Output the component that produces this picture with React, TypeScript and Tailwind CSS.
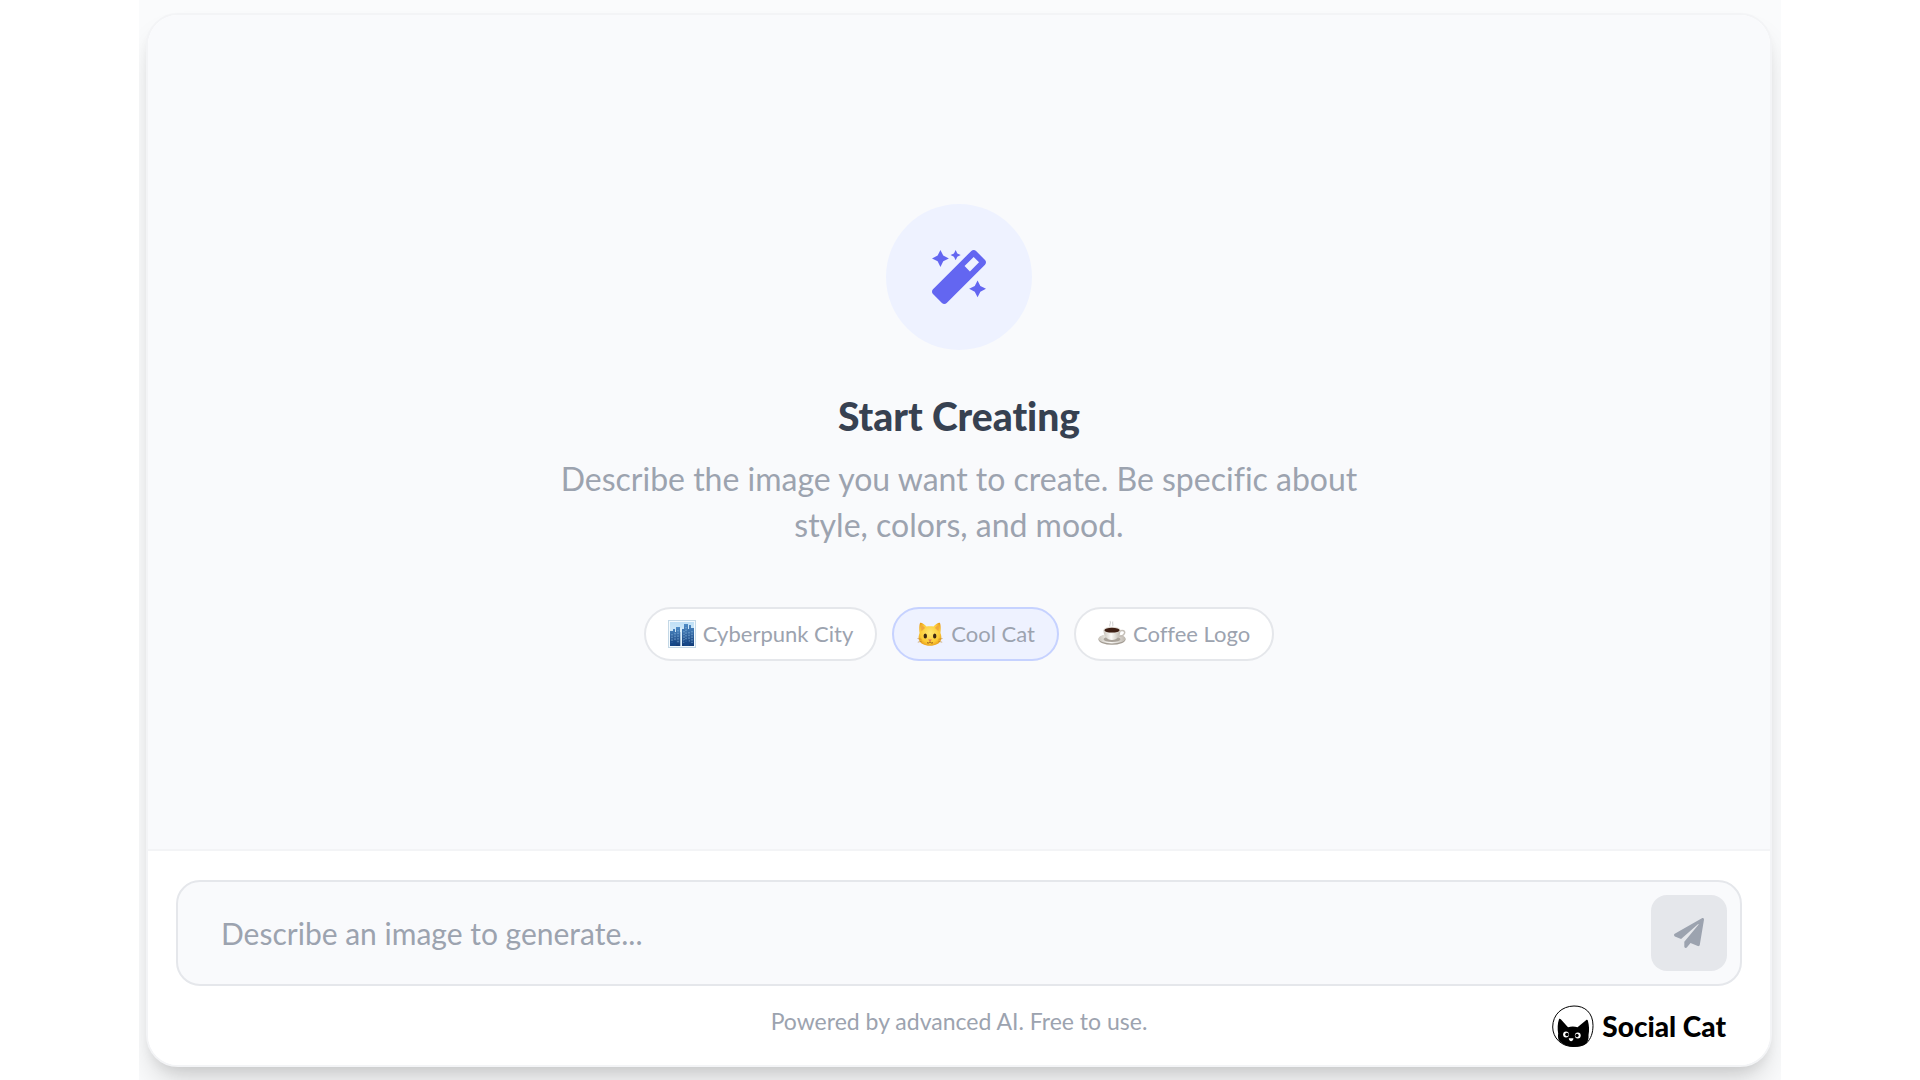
import React from "react";
import { FaMagic, FaPaperPlane } from "react-icons/fa";

function CityIcon() {
  return (
    <svg viewBox="0 0 28 28" className="size-7 shrink-0" aria-hidden="true">
      <defs>
        <linearGradient id="sky" x1="0" y1="0" x2="0" y2="1">
          <stop offset="0" stopColor="#bfe0f6" />
          <stop offset="1" stopColor="#e9f5fc" />
        </linearGradient>
        <linearGradient id="tower" x1="0" y1="0" x2="0" y2="1">
          <stop offset="0" stopColor="#4f8cc6" />
          <stop offset="1" stopColor="#123c78" />
        </linearGradient>
      </defs>
      <rect x="0.5" y="0.5" width="27" height="27" fill="#f4fafe" stroke="#c4d8e6" />
      <rect x="2" y="2" width="24" height="24" fill="url(#sky)" />
      <path d="M2 11h3V9h2v3h1V7h4v5h1v14H2z" fill="url(#tower)" />
      <path d="M14 9h2V4h4v5h1V5h2v3h3v18H14z" fill="url(#tower)" />
      <path d="M4 14v9M7 13v8M10 10v13M16 11v12M18 7v16M21 12v10M24 11v12" stroke="#8fbfe6" strokeWidth="0.8" strokeDasharray="1.5 1.2" />
      <path d="M13 8v18" stroke="#dff1fb" strokeWidth="1.4" />
      <path d="M2 21h6v5H2zM16 20h5v6h-5z" fill="#174a8c" opacity="0.7" />
    </svg>
  );
}

function CatIcon() {
  return (
    <svg viewBox="0 0 28 28" className="size-7 shrink-0" aria-hidden="true">
      <defs>
        <radialGradient id="fur" cx="0.5" cy="0.45" r="0.6">
          <stop offset="0" stopColor="#ffe873" />
          <stop offset="0.7" stopColor="#fccb35" />
          <stop offset="1" stopColor="#e79a1a" />
        </radialGradient>
      </defs>
      <path d="M4.2 2.8C5 2 9 4.6 10.5 6.6c2-.6 5-.6 7 0C19 4.6 23 2 23.8 2.8c1 1.4 1.2 6.6.6 10.2.9 2.2 1.2 4.2.8 6.2C24.3 23.5 19.5 25.7 14 25.7S3.7 23.5 2.8 19.2c-.4-2 0-4 .8-6.2C3 9.4 3.2 4.2 4.2 2.8z" fill="url(#fur)" />
      <path d="M5.3 5c1.3.5 2.8 1.7 3.7 2.9L5.5 11.3C5 9.3 4.9 6.8 5.3 5zM22.7 5c-1.3.5-2.8 1.7-3.7 2.9l3.5 3.4c.5-2 .6-4.5.2-6.3z" fill="#f0a93c" />
      <ellipse cx="9.3" cy="16" rx="1.7" ry="2.5" fill="#3d2712" />
      <ellipse cx="18.7" cy="16" rx="1.7" ry="2.5" fill="#3d2712" />
      <path d="M12 19.5h4L14 21.5z" fill="#e0705a" />
      <path d="M11 22.8q1.8.8 3-1q1.2 1.8 3 1" fill="none" stroke="#8a4d16" strokeWidth="0.9" />
      <path d="M1.5 18.5l4 .8M1.8 22.2l4-1M26.5 18.5l-4 .8M26.2 22.2l-4-1" stroke="#b9822a" strokeWidth="0.6" />
    </svg>
  );
}

function CoffeeIcon() {
  return (
    <svg viewBox="0 0 28 28" className="size-7 shrink-0" aria-hidden="true">
      <defs>
        <linearGradient id="china" x1="0" y1="0" x2="1" y2="0">
          <stop offset="0" stopColor="#c9c4bb" />
          <stop offset="0.45" stopColor="#fbfaf7" />
          <stop offset="1" stopColor="#bdb7ae" />
        </linearGradient>
      </defs>
      <ellipse cx="14" cy="19.5" rx="13.5" ry="5.3" fill="#a29b92" />
      <ellipse cx="14" cy="18.6" rx="13.5" ry="4.9" fill="url(#china)" />
      <ellipse cx="14" cy="19.2" rx="8.5" ry="2.8" fill="#a9a299" />
      <path d="M21.5 11c3.5-1.3 5.8 0 5 2.2-.7 1.9-3.5 3.2-6 3.3" fill="none" stroke="#c5bfb7" strokeWidth="1.5" />
      <path d="M5.5 10c0 5.5 3 10 8.5 10s8.5-4.5 8.5-10z" fill="url(#china)" />
      <ellipse cx="14" cy="10" rx="8.6" ry="3.2" fill="#e4dfd8" />
      <ellipse cx="14" cy="10.2" rx="7.6" ry="2.4" fill="#3f2015" />
      <path d="M12 6.5C10.5 4.5 14 3.5 12 1M14.5 6c1.5-1.5-1-2.5.5-4.5" fill="none" stroke="#d4d4d4" strokeWidth="1.1" />
    </svg>
  );
}

function SocialCatMark() {
  return (
    <svg viewBox="0 0 42 42" className="size-[42px] shrink-0" aria-hidden="true">
      <path d="M22 1C33 .8 41 8 41 20.5c0 7-2 13.5-6.5 17.5C31 41 26.5 41.5 21 41.5 9.5 41.5.7 33 .7 22 .7 9.5 10 1.2 22 1z" fill="#fff" stroke="#000" strokeWidth="1" />
      <path d="M7 14.2c.5-.6 1.3-.5 2 .2l7 7.8c3-1 6.5-1 9.5 0l8.5-7c.8-.6 1.7-.5 1.9.5 1.2 4.5 1.6 9.5.6 14.3.3 3-.3 6-2 8.5C31 41.2 26.5 41.5 21 41.5c-6.3 0-11-2.4-14.3-6.5-.8-2-.9-4.3-.5-6.5C5.3 24 5.5 18 7 14.2z" fill="#000" />
      <circle cx="14" cy="29.5" r="2.9" fill="#fff" />
      <circle cx="25.8" cy="30.5" r="2.9" fill="#fff" />
      <circle cx="14.9" cy="29.5" r="1.7" fill="#000" />
      <circle cx="25" cy="30.5" r="1.7" fill="#000" />
      <path d="M16.8 33.2h4.6c.3 1.3-1.2 3-2.3 3s-2.5-1.6-2.3-3z" fill="#fff" />
    </svg>
  );
}

type ChipProps = { icon: React.ReactNode; label: string; active?: boolean };

function Chip({ icon, label, active = false }: ChipProps) {
  return (
    <button
      type="button"
      className={
        "flex h-[54px] items-center gap-[7px] rounded-full border-2 px-[22px] text-[22px] text-[#9ca3af] " +
        (active ? "border-indigo-200 bg-[#eef2ff]" : "border-gray-200 bg-white")
      }
    >
      {icon}
      {label}
    </button>
  );
}

export default function App() {
  return (
    <div className="min-h-screen bg-white font-['Avenir_Next',Avenir,Lato,sans-serif] [font-variant-ligatures:no-common-ligatures]">
      <div className="mx-auto flex min-h-screen max-w-[1642px] flex-col overflow-hidden bg-[#fafbfc] py-[13px] pr-[9px] pl-[7px]">
        <div className="flex flex-1 flex-col overflow-hidden rounded-[32px] border-2 border-gray-100 bg-white shadow-[0_20px_30px_-6px_rgba(0,0,0,0.15),0_8px_12px_-4px_rgba(0,0,0,0.08)]">
          <main className="flex flex-1 flex-col items-center justify-center bg-[#f9fafc] px-6 text-center">
            <div className="flex size-[146px] items-center justify-center rounded-full bg-[#eef2ff]">
              <FaMagic className="size-[54px] text-[#6366f1]" aria-hidden="true" />
            </div>
            <h1 className="mt-[42px] text-[39px] leading-[48px] font-black text-[#374151]">Start Creating</h1>
            <p className="mt-4 max-w-[832px] text-[32px] leading-[46px] text-[#9ca3af]">
              Describe the image you want to create. Be specific about style, colors, and mood.
            </p>
            <div className="mt-[59px] flex flex-wrap justify-center gap-[15px]">
              <Chip icon={<CityIcon />} label="Cyberpunk City" />
              <Chip icon={<CatIcon />} label="Cool Cat" active />
              <Chip icon={<CoffeeIcon />} label="Coffee Logo" />
            </div>
          </main>

          <footer className="border-t-2 border-gray-100 bg-white px-7 pt-[29px] pb-[18px]">
            <form
              className="flex items-center rounded-3xl border-2 border-gray-200 bg-[#f9fafc] p-[13px]"
              onSubmit={(e) => e.preventDefault()}
            >
              <input
                type="text"
                aria-label="Describe an image to generate"
                placeholder="Describe an image to generate..."
                className="h-[76px] min-w-0 flex-1 bg-transparent px-[30px] text-[30px] text-[#374151] outline-none placeholder:text-[#9ca3af]"
              />
              <button
                type="submit"
                aria-label="Generate"
                className="flex size-[76px] items-center justify-center rounded-2xl bg-gray-200 text-[#9ca3af]"
              >
                <FaPaperPlane className="size-[30px]" aria-hidden="true" />
              </button>
            </form>
            <div className="mt-[19px] grid grid-cols-[1fr_auto_1fr] items-start">
              <p className="col-start-2 text-[23px] leading-8 text-[#9ca3af]">Powered by advanced AI. Free to use.</p>
              <a href="#" className="flex items-center gap-2 justify-self-end pr-4 text-[28px] leading-[42px] font-black text-black">
                <SocialCatMark />
                Social Cat
              </a>
            </div>
          </footer>
        </div>
      </div>
    </div>
  );
}
